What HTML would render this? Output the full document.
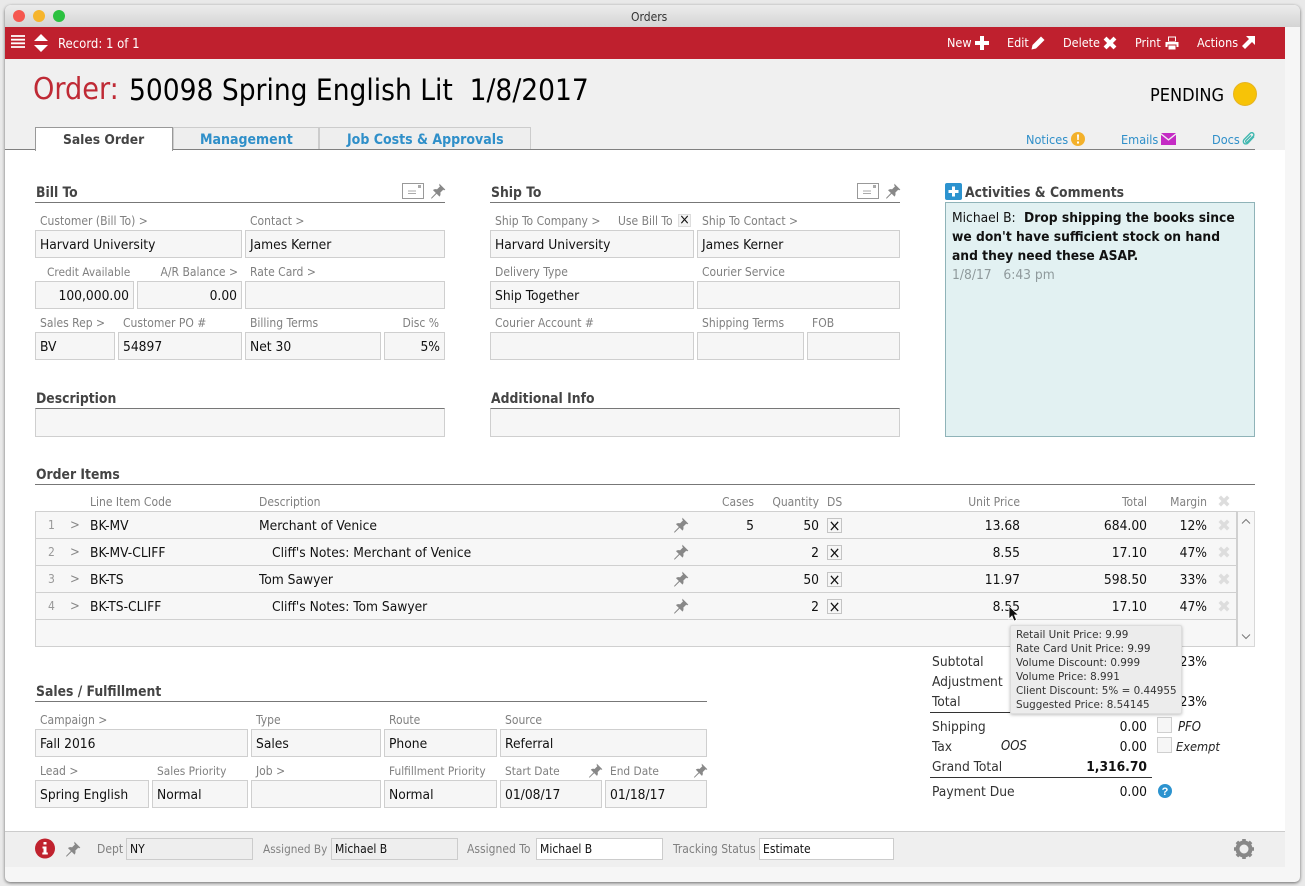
<!DOCTYPE html>
<html><head><meta charset="utf-8"><title>Orders</title>
<style>
html,body{margin:0;padding:0;width:1305px;height:886px;overflow:hidden;background:#e9e9e9}
body{position:relative;font-family:"DejaVu Sans","Liberation Sans",sans-serif;font-stretch:condensed;color:#000}
div,svg,span.a{position:absolute}
.t{position:absolute;white-space:nowrap;line-height:16px;font-size:13.7px;color:#111;margin-top:1px}
.l{font-size:12px;color:#808080;margin-top:0}
.h{font-size:13.8px;font-weight:bold;color:#444}
.m0{margin-top:0}
.r{transform:translateX(-100%)}
.f{position:absolute;box-sizing:border-box;height:28px;background:#f6f6f6;border:1px solid #cfcfcf}
.ln{position:absolute;height:1px;background:#777}
.b{color:#2f8fc9}
.row{position:absolute;left:35px;width:1202px;height:27px;box-sizing:border-box;background:#f7f7f7;border:1px solid #d0d0d0;border-top:0}
.cb{position:absolute;box-sizing:border-box;width:15px;height:15px;background:#f6f6f6;border:1px solid #c4c4c4;font-size:16px;line-height:13px;text-align:center;color:#111}
.n{color:#999;font-size:12px;margin-top:0}
.tt{position:absolute;left:1016px;white-space:nowrap;font-size:10.4px;line-height:14px;color:#333;font-stretch:normal}
</style></head><body>
<svg width="0" height="0" style="position:absolute"><defs>
<symbol id="pin" viewBox="0 0 24 24"><path d="M14 1l9 9-2 1-1-1-4.500 4.500c.6 2.400.2 4.500-1.200 6l-4.300-4.300-7 6.800-1.500.5.500-1.500 6.800-7-4.300-4.300c1.500-1.400 3.600-1.800 6-1.200L15 5l-1-1z" fill="currentColor"/></symbol>
<symbol id="x" viewBox="0 0 24 24"><path d="M6 1l6 6 6-6 5 5-6 6 6 6-5 5-6-6-6 6-5-5 6-6-6-6z" fill="currentColor"/></symbol>
<symbol id="card" viewBox="0 0 22 16"><rect x=".5" y=".5" width="21" height="15" fill="#fff" stroke="#999"/><rect x="16" y="2" width="3" height="3" fill="#aaa"/><path d="M6 8h8M6 10.500h8" stroke="#aaa"/></symbol>
</defs></svg>

<!-- window -->
<div style="left:5px;top:5px;width:1295px;height:877px;background:#f6f6f6;border-radius:6px 6px 5px 5px;box-shadow:0 1px 3px rgba(0,0,0,.55)"></div>
<div style="left:5px;top:5px;width:1295px;height:22px;background:linear-gradient(#ececec,#d4d4d4);border-radius:6px 6px 0 0"></div>
<div style="left:13px;top:10px;width:12px;height:12px;border-radius:50%;background:#f5574f"></div>
<div style="left:33px;top:10px;width:12px;height:12px;border-radius:50%;background:#f6b52d"></div>
<div style="left:53px;top:10px;width:12px;height:12px;border-radius:50%;background:#2bc140"></div>
<div class="t" style="left:631px;top:8px;font-size:12px;color:#333">Orders</div>

<!-- toolbar -->
<div style="left:5px;top:27px;width:1280px;height:32px;background:#bf202e"></div>
<svg style="left:11px;top:35px" width="14" height="14"><path d="M0 1h14M0 4.700h14M0 8.300h14M0 12h14" stroke="#fff" stroke-width="1.800"/></svg>
<svg style="left:34px;top:34px" width="14" height="18"><path d="M7 0l7 7H0zM7 18l7-7H0z" fill="#fff"/></svg>
<div class="t" style="left:58px;top:36px;font-size:13px;color:#fff">Record: 1 of 1</div>
<div class="t m0" style="left:947px;top:35px;font-size:12.500px;color:#fff">New</div>
<svg style="left:975px;top:36px" width="14" height="14"><path d="M5 0h4v5h5v4H9v5H5V9H0V5h5z" fill="#fff"/></svg>
<div class="t m0" style="left:1007px;top:35px;font-size:12.500px;color:#fff">Edit</div>
<svg style="left:1031px;top:36px" width="14" height="14" viewBox="0 0 14 14"><path d="M10 .5l3.500 3.500-8.500 8.500L.5 13.500 1.500 9z" fill="#fff"/></svg>
<div class="t m0" style="left:1063px;top:35px;font-size:12.500px;color:#fff">Delete</div>
<svg style="left:1103px;top:36px;color:#fff" width="14" height="14"><use href="#x"/></svg>
<div class="t m0" style="left:1135px;top:35px;font-size:12.500px;color:#fff">Print</div>
<svg style="left:1165px;top:36px" width="14" height="14" viewBox="0 0 14 14"><path d="M3 .5h8v5H3zM.5 6h13v5h-2V8.500h-9V11h-2zM3.500 9.500h7v4h-7z" fill="#fff" fill-rule="evenodd"/><path d="M4 1.500h6v3.500H4z" fill="#bf202e"/></svg>
<div class="t m0" style="left:1197px;top:35px;font-size:12.500px;color:#fff">Actions</div>
<svg style="left:1242px;top:36px" width="13" height="13" viewBox="0 0 13 13"><path d="M4 0h9v9l-3-3-7 7-3-3 7-7z" fill="#fff"/></svg>

<!-- header -->
<div style="left:5px;top:59px;width:1280px;height:91px;background:#f0f0f0"></div>
<div class="t m0" style="left:33px;top:71px;font-size:30.200px;line-height:38px;color:#bf2a35">Order:</div>
<div class="t m0" style="left:129px;top:71px;font-size:29.500px;line-height:38px;color:#000;white-space:pre">50098 Spring English Lit  1/8/2017</div>
<div class="t" style="left:1150px;top:86px;font-size:18px;line-height:18px;color:#000">PENDING</div>
<div style="left:1233px;top:82px;width:22px;height:22px;border-radius:50%;background:#f7c307;border:1px solid #e6b422"></div>

<!-- tabs -->
<div style="left:5px;top:150px;width:1280px;height:682px;background:#fff"></div>
<div class="ln" style="left:5px;top:149px;width:1250px;background:#808080"></div>
<div style="left:173px;top:127px;width:146px;height:22px;box-sizing:border-box;background:#eee;border:1px solid #ccc;border-bottom:0"></div>
<div style="left:319px;top:127px;width:212px;height:22px;box-sizing:border-box;background:#eee;border:1px solid #ccc;border-bottom:0"></div>
<div style="left:35px;top:127px;width:138px;height:24px;box-sizing:border-box;background:#fff;border:1px solid #999;border-bottom:0;z-index:2"></div>
<div class="t" style="left:63px;top:131px;font-weight:bold;color:#444;z-index:3">Sales Order</div>
<div class="t b" style="left:200px;top:131px;font-weight:bold;font-size:14px">Management</div>
<div class="t b" style="left:347px;top:131px;font-weight:bold;font-size:14px">Job Costs &amp; Approvals</div>
<div class="t b m0" style="left:1026px;top:132px;font-size:12.600px">Notices</div>
<svg style="left:1071px;top:132px" width="14" height="14"><circle cx="7" cy="7" r="7" fill="#f3b12b"/><path d="M6 2.500h2l-.3 5.500H6.300zM6 9.500h2v2H6z" fill="#fff"/></svg>
<div class="t b m0" style="left:1121px;top:132px;font-size:12.600px">Emails</div>
<svg style="left:1161px;top:133px" width="15" height="12"><path d="M0 0h15L7.500 6z" fill="#c42bc4"/><path d="M0 1.800l7.500 6 7.500-6V12H0z" fill="#c42bc4"/></svg>
<div class="t b m0" style="left:1212px;top:132px;font-size:12.600px">Docs</div>
<svg style="left:1242px;top:132px" width="14" height="14" viewBox="0 0 14 14"><path d="M12 4.500L6 11c-1.200 1.200-3 1.200-4 .2s-.9-2.600.2-3.800L8 1.500c1-1 2.300-1 3.200-.2s.9 2.100 0 3L5.500 10c-.5.500-1.200.5-1.600.1s-.4-1.100.1-1.600L9 3.500" fill="none" stroke="#41b8b0" stroke-width="1.400"/></svg>

<!-- Bill To -->
<div class="t h" style="left:36px;top:184px">Bill To</div>
<div class="ln" style="left:35px;top:202px;width:410px"></div>
<svg style="left:402px;top:183px" width="22" height="16"><use href="#card"/></svg>
<svg style="left:430px;top:183px;color:#888" width="16" height="16"><use href="#pin"/></svg>
<div class="t l" style="left:40px;top:213px">Customer (Bill To) &gt;</div>
<div class="t l" style="left:250px;top:213px">Contact &gt;</div>
<div class="f" style="left:35px;top:230px;width:207px"></div><div class="t" style="left:40px;top:236px">Harvard University</div>
<div class="f" style="left:245px;top:230px;width:200px"></div><div class="t" style="left:250px;top:236px">James Kerner</div>
<div class="t l" style="left:47px;top:264px;font-size:11.800px">Credit Available</div>
<div class="t l r" style="left:238px;top:264px">A/R Balance &gt;</div>
<div class="t l" style="left:250px;top:264px">Rate Card &gt;</div>
<div class="f" style="left:35px;top:281px;width:99px"></div><div class="t r" style="left:129px;top:287px">100,000.00</div>
<div class="f" style="left:137px;top:281px;width:105px"></div><div class="t r" style="left:237px;top:287px">0.00</div>
<div class="f" style="left:245px;top:281px;width:200px"></div>
<div class="t l" style="left:40px;top:315px">Sales Rep &gt;</div>
<div class="t l" style="left:123px;top:315px">Customer PO #</div>
<div class="t l" style="left:250px;top:315px">Billing Terms</div>
<div class="t l r" style="left:439px;top:315px">Disc %</div>
<div class="f" style="left:35px;top:332px;width:80px"></div><div class="t" style="left:40px;top:338px">BV</div>
<div class="f" style="left:118px;top:332px;width:124px"></div><div class="t" style="left:123px;top:338px">54897</div>
<div class="f" style="left:245px;top:332px;width:136px"></div><div class="t" style="left:250px;top:338px">Net 30</div>
<div class="f" style="left:384px;top:332px;width:61px"></div><div class="t r" style="left:440px;top:338px">5%</div>

<!-- Ship To -->
<div class="t h" style="left:491px;top:184px">Ship To</div>
<div class="ln" style="left:490px;top:202px;width:410px"></div>
<svg style="left:857px;top:183px" width="22" height="16"><use href="#card"/></svg>
<svg style="left:885px;top:183px;color:#888" width="16" height="16"><use href="#pin"/></svg>
<div class="t l" style="left:495px;top:213px">Ship To Company &gt;</div>
<div class="t l" style="left:618px;top:213px">Use Bill To</div>
<div class="cb" style="left:678px;top:214px;width:13px;height:13px;font-size:14px;line-height:11px;background:#f3f3f3;border-color:#ddd">×</div>
<div class="t l" style="left:702px;top:213px">Ship To Contact &gt;</div>
<div class="f" style="left:490px;top:230px;width:204px"></div><div class="t" style="left:495px;top:236px">Harvard University</div>
<div class="f" style="left:697px;top:230px;width:203px"></div><div class="t" style="left:702px;top:236px">James Kerner</div>
<div class="t l" style="left:495px;top:264px">Delivery Type</div>
<div class="t l" style="left:702px;top:264px">Courier Service</div>
<div class="f" style="left:490px;top:281px;width:204px"></div><div class="t" style="left:495px;top:287px">Ship Together</div>
<div class="f" style="left:697px;top:281px;width:203px"></div>
<div class="t l" style="left:495px;top:315px">Courier Account #</div>
<div class="t l" style="left:702px;top:315px">Shipping Terms</div>
<div class="t l" style="left:812px;top:315px">FOB</div>
<div class="f" style="left:490px;top:332px;width:204px"></div>
<div class="f" style="left:697px;top:332px;width:107px"></div>
<div class="f" style="left:807px;top:332px;width:93px"></div>

<!-- Description -->
<div class="t h" style="left:36px;top:390px">Description</div>
<div class="f" style="left:35px;top:408px;width:410px;height:29px;border-top-color:#777"></div>
<div class="t h" style="left:491px;top:390px">Additional Info</div>
<div class="f" style="left:490px;top:408px;width:410px;height:29px;border-top-color:#777"></div>

<!-- Activities -->
<svg style="left:945px;top:183px" width="17" height="17"><rect width="17" height="17" rx="2" fill="#2c93cf"/><path d="M7 3.500h3V7h3.500v3H10v3.500H7V10H3.500V7H7z" fill="#fff"/></svg>
<div class="t h" style="left:965px;top:184px">Activities &amp; Comments</div>
<div style="left:945px;top:202px;width:310px;height:235px;box-sizing:border-box;background:#e2f1f2;border:1px solid #8fb3b8"></div>
<div class="t" style="left:952px;top:209px">Michael B:</div>
<div class="t" style="left:1024px;top:209px;font-weight:bold">Drop shipping the books since</div>
<div class="t" style="left:952px;top:228px;font-weight:bold">we don't have sufficient stock on hand</div>
<div class="t" style="left:952px;top:247px;font-weight:bold">and they need these ASAP.</div>
<div class="t" style="left:952px;top:266px;color:#8f9a9c;white-space:pre">1/8/17   6:43 pm</div>

<!-- Order items -->
<div class="t h" style="left:36px;top:466px">Order Items</div>
<div class="ln" style="left:35px;top:484px;width:1220px"></div>
<div class="t l" style="left:90px;top:494px">Line Item Code</div>
<div class="t l" style="left:259px;top:494px">Description</div>
<div class="t l r" style="left:754px;top:494px">Cases</div>
<div class="t l r" style="left:819px;top:494px">Quantity</div>
<div class="t l" style="left:827px;top:494px">DS</div>
<div class="t l r" style="left:1020px;top:494px">Unit Price</div>
<div class="t l r" style="left:1147px;top:494px">Total</div>
<div class="t l r" style="left:1207px;top:494px">Margin</div>
<svg style="left:1218px;top:495px;color:#ddd" width="12" height="12"><use href="#x"/></svg>
<div style="left:35px;top:511px;width:1220px;height:1px;background:#d0d0d0"></div>
<div class="row" style="top:512px"></div>
<div class="row" style="top:539px"></div>
<div class="row" style="top:566px"></div>
<div class="row" style="top:593px"></div>
<div class="row" style="top:620px"></div>
<div style="left:1237px;top:511px;width:18px;height:136px;box-sizing:border-box;background:#f7f7f7;border:1px solid #d8d8d8;border-left:1px solid #d0d0d0"></div>
<svg style="left:1241px;top:518px" width="10" height="8"><path d="M1 5.500l4-4 4 4" fill="none" stroke="#777"/></svg>
<svg style="left:1241px;top:633px" width="10" height="8"><path d="M1 1.500l4 4 4-4" fill="none" stroke="#777"/></svg>

<div class="t n" style="left:48px;top:517px">1</div><div class="t" style="left:70px;top:517px;font-size:13px;color:#888">&gt;</div>
<div class="t" style="left:90px;top:517px">BK-MV</div><div class="t" style="left:259px;top:517px">Merchant of Venice</div>
<svg style="left:673px;top:517px;color:#888" width="16" height="16"><use href="#pin"/></svg>
<div class="t r" style="left:754px;top:517px">5</div><div class="t r" style="left:819px;top:517px">50</div>
<div class="cb" style="left:827px;top:518px">×</div>
<div class="t r" style="left:1020px;top:517px">13.68</div><div class="t r" style="left:1147px;top:517px">684.00</div><div class="t r" style="left:1207px;top:517px">12%</div>
<svg style="left:1218px;top:519px;color:#ddd" width="12" height="12"><use href="#x"/></svg>

<div class="t n" style="left:48px;top:544px">2</div><div class="t" style="left:70px;top:544px;font-size:13px;color:#888">&gt;</div>
<div class="t" style="left:90px;top:544px">BK-MV-CLIFF</div><div class="t" style="left:272px;top:544px">Cliff's Notes: Merchant of Venice</div>
<svg style="left:673px;top:544px;color:#888" width="16" height="16"><use href="#pin"/></svg>
<div class="t r" style="left:819px;top:544px">2</div>
<div class="cb" style="left:827px;top:545px">×</div>
<div class="t r" style="left:1020px;top:544px">8.55</div><div class="t r" style="left:1147px;top:544px">17.10</div><div class="t r" style="left:1207px;top:544px">47%</div>
<svg style="left:1218px;top:546px;color:#ddd" width="12" height="12"><use href="#x"/></svg>

<div class="t n" style="left:48px;top:571px">3</div><div class="t" style="left:70px;top:571px;font-size:13px;color:#888">&gt;</div>
<div class="t" style="left:90px;top:571px">BK-TS</div><div class="t" style="left:259px;top:571px">Tom Sawyer</div>
<svg style="left:673px;top:571px;color:#888" width="16" height="16"><use href="#pin"/></svg>
<div class="t r" style="left:819px;top:571px">50</div>
<div class="cb" style="left:827px;top:572px">×</div>
<div class="t r" style="left:1020px;top:571px">11.97</div><div class="t r" style="left:1147px;top:571px">598.50</div><div class="t r" style="left:1207px;top:571px">33%</div>
<svg style="left:1218px;top:573px;color:#ddd" width="12" height="12"><use href="#x"/></svg>

<div class="t n" style="left:48px;top:598px">4</div><div class="t" style="left:70px;top:598px;font-size:13px;color:#888">&gt;</div>
<div class="t" style="left:90px;top:598px">BK-TS-CLIFF</div><div class="t" style="left:272px;top:598px">Cliff's Notes: Tom Sawyer</div>
<svg style="left:673px;top:598px;color:#888" width="16" height="16"><use href="#pin"/></svg>
<div class="t r" style="left:819px;top:598px">2</div>
<div class="cb" style="left:827px;top:599px">×</div>
<div class="t r" style="left:1020px;top:598px">8.55</div><div class="t r" style="left:1147px;top:598px">17.10</div><div class="t r" style="left:1207px;top:598px">47%</div>
<svg style="left:1218px;top:600px;color:#ddd" width="12" height="12"><use href="#x"/></svg>

<!-- Sales / Fulfillment -->
<div class="t h" style="left:36px;top:683px">Sales / Fulfillment</div>
<div class="ln" style="left:35px;top:701px;width:672px"></div>
<div class="t l" style="left:40px;top:712px">Campaign &gt;</div>
<div class="t l" style="left:256px;top:712px">Type</div>
<div class="t l" style="left:389px;top:712px">Route</div>
<div class="t l" style="left:505px;top:712px">Source</div>
<div class="f" style="left:35px;top:729px;width:213px"></div><div class="t" style="left:40px;top:735px">Fall 2016</div>
<div class="f" style="left:251px;top:729px;width:130px"></div><div class="t" style="left:256px;top:735px">Sales</div>
<div class="f" style="left:384px;top:729px;width:113px"></div><div class="t" style="left:389px;top:735px">Phone</div>
<div class="f" style="left:500px;top:729px;width:207px"></div><div class="t" style="left:505px;top:735px">Referral</div>
<div class="t l" style="left:40px;top:763px">Lead &gt;</div>
<div class="t l" style="left:157px;top:763px;font-size:11.800px">Sales Priority</div>
<div class="t l" style="left:256px;top:763px">Job &gt;</div>
<div class="t l" style="left:389px;top:763px;font-size:11.800px">Fulfillment Priority</div>
<div class="t l" style="left:505px;top:763px;font-size:11.800px">Start Date</div>
<div class="t l" style="left:610px;top:763px;font-size:11.800px">End Date</div>
<svg style="left:588px;top:763px;color:#888" width="15" height="15"><use href="#pin"/></svg>
<svg style="left:693px;top:763px;color:#888" width="15" height="15"><use href="#pin"/></svg>
<div class="f" style="left:35px;top:780px;width:114px"></div><div class="t" style="left:40px;top:786px">Spring English</div>
<div class="f" style="left:152px;top:780px;width:96px"></div><div class="t" style="left:157px;top:786px">Normal</div>
<div class="f" style="left:251px;top:780px;width:130px"></div>
<div class="f" style="left:384px;top:780px;width:113px"></div><div class="t" style="left:389px;top:786px">Normal</div>
<div class="f" style="left:500px;top:780px;width:102px"></div><div class="t" style="left:505px;top:786px">01/08/17</div>
<div class="f" style="left:605px;top:780px;width:102px"></div><div class="t" style="left:610px;top:786px">01/18/17</div>

<!-- Totals -->
<div class="t" style="left:932px;top:653px;color:#333">Subtotal</div>
<div class="t" style="left:932px;top:673px;color:#333">Adjustment</div>
<div class="t" style="left:932px;top:693px;color:#333">Total</div>
<div class="t r" style="left:1207px;top:653px">23%</div>
<div class="t r" style="left:1207px;top:693px">23%</div>
<div class="ln" style="left:930px;top:712px;width:222px;background:#333"></div>
<div class="t" style="left:932px;top:718px;color:#333">Shipping</div><div class="t r" style="left:1147px;top:718px">0.00</div>
<div class="f" style="left:1157px;top:717px;width:15px;height:16px"></div><div class="t" style="left:1178px;top:719px;font-size:13px;font-style:italic;color:#222">PFO</div>
<div class="t" style="left:932px;top:738px;color:#333">Tax</div><div class="t" style="left:1001px;top:738px;font-size:13px;font-style:italic;color:#222">OOS</div><div class="t r" style="left:1147px;top:738px">0.00</div>
<div class="f" style="left:1157px;top:737px;width:15px;height:16px"></div><div class="t" style="left:1176px;top:738px;font-size:12.700px;font-style:italic;color:#222">Exempt</div>
<div class="t" style="left:932px;top:758px;color:#333">Grand Total</div><div class="t r" style="left:1147px;top:758px;font-weight:bold">1,316.70</div>
<div class="ln" style="left:930px;top:777px;width:222px;background:#333"></div>
<div class="t" style="left:932px;top:783px;color:#333">Payment Due</div><div class="t r" style="left:1147px;top:783px">0.00</div>
<svg style="left:1158px;top:784px" width="14" height="14"><circle cx="7" cy="7" r="7" fill="#2c93cf"/><text x="7" y="11" font-size="11" font-weight="bold" fill="#fff" text-anchor="middle" font-family="Liberation Sans">?</text></svg>

<!-- Tooltip -->
<div style="left:1010px;top:625px;width:172px;height:89px;box-sizing:border-box;background:#ececec;border:1px solid #ddd;box-shadow:0 1px 3px rgba(0,0,0,.25);border-radius:2px;z-index:5"></div>
<div style="z-index:6;left:0;top:0">
<div class="tt" style="top:628px">Retail Unit Price: 9.99</div>
<div class="tt" style="top:642px">Rate Card Unit Price: 9.99</div>
<div class="tt" style="top:656px">Volume Discount: 0.999</div>
<div class="tt" style="top:670px">Volume Price: 8.991</div>
<div class="tt" style="top:684px">Client Discount: 5% = 0.44955</div>
<div class="tt" style="top:698px">Suggested Price: 8.54145</div>
</div>
<svg style="left:1008px;top:605px;z-index:7" width="12" height="18" viewBox="0 0 12 18"><path d="M1 1v13l3-3 2 5 2.500-1-2-5h4z" fill="#111" stroke="#fff" stroke-width=".8"/></svg>

<!-- Footer -->
<div style="left:5px;top:831px;width:1280px;height:36px;box-sizing:border-box;background:#efefef;border-top:1px solid #ccc"></div>
<svg style="left:35px;top:838px" width="20" height="21"><circle cx="10" cy="10.500" r="10" fill="#c0222e"/><path d="M8.500 4h3v2.500h-3zM7.500 8.500h4v6h1.300v2H7.300v-2h1.200v-4h-1z" fill="#fff"/></svg>
<svg style="left:65px;top:841px;color:#888" width="16" height="16"><use href="#pin"/></svg>
<div class="t l" style="left:97px;top:841px">Dept</div>
<div class="f" style="left:126px;top:838px;width:127px;height:22px;background:#eee;border-color:#ccc"></div><div class="t m0" style="left:130px;top:841px;font-size:12px">NY</div>
<div class="t l" style="left:263px;top:841px;font-size:11.700px">Assigned By</div>
<div class="f" style="left:331px;top:838px;width:127px;height:22px;background:#eee;border-color:#ccc"></div><div class="t m0" style="left:335px;top:841px;font-size:12px">Michael B</div>
<div class="t l" style="left:467px;top:841px">Assigned To</div>
<div class="f" style="left:536px;top:838px;width:127px;height:22px;background:#fff;border-color:#ccc"></div><div class="t m0" style="left:540px;top:841px;font-size:12px">Michael B</div>
<div class="t l" style="left:673px;top:841px">Tracking Status</div>
<div class="f" style="left:759px;top:838px;width:135px;height:22px;background:#fff;border-color:#ccc"></div><div class="t m0" style="left:763px;top:841px;font-size:12px">Estimate</div>
<svg style="left:1233px;top:838px" width="22" height="22" viewBox="0 0 22 22"><circle cx="11" cy="11" r="6.500" fill="none" stroke="#888" stroke-width="4"/><path d="M11 1v20M1 11h20M3.900 3.900l14.200 14.200M18.100 3.900L3.900 18.100" stroke="#888" stroke-width="3.600" stroke-dasharray="3.600 12.800 3.600 0"/></svg>
</body></html>
